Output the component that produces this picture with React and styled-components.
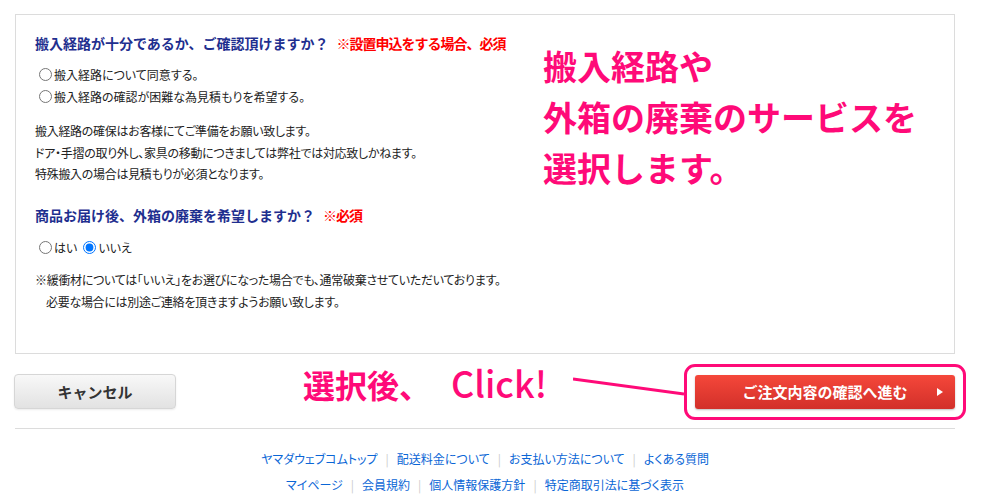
import React from 'react';
import styled, { createGlobalStyle } from 'styled-components';

const GlobalStyle = createGlobalStyle`
  html, body {
    margin: 0;
    padding: 0;
    background: #ffffff;
  }
  body {
    font-family: "Noto Sans CJK JP", "Noto Sans", sans-serif;
    color: #222;
  }
`;

const Page = styled.div`
  width: 993px;
  padding: 14px 0 0 15px;
  box-sizing: border-box;
`;

const Box = styled.div`
  width: 940px;
  box-sizing: border-box;
  border: 1px solid #dcdcdc;
  padding: 18px 20px 40px 19px;
  display: flex;
`;

const Form = styled.div`
  width: 508px;
  flex-shrink: 0;
`;

const Heading = styled.div`
  font-size: 14px;
  font-weight: bold;
  line-height: 20px;
  color: #1f2f8f;
  margin-top: ${p => p.$top || 0}px;
  white-space: nowrap;
`;

const Required = styled.span`
  color: #ff0000;
  margin-left: 8px;
  letter-spacing: -1px;
`;

const Options = styled.div`
  margin-top: ${p => p.$top || 10}px;
  display: flex;
  flex-direction: ${p => (p.$inline ? 'row' : 'column')};
`;

const Option = styled.label`
  display: flex;
  align-items: center;
  height: 22px;
  font-size: 12px;
  font-feature-settings: "palt";
  color: #222;
  white-space: nowrap;
  margin-right: ${p => (p.$inline ? 2 : 0)}px;

  input {
    margin: 0 2px 0 4px;
    width: 13px;
    height: 13px;
  }
`;

const Notes = styled.div`
  margin-top: ${p => p.$top || 13}px;
  font-size: 12px;
  font-feature-settings: "palt";
  letter-spacing: -0.3px;
  line-height: ${p => p.$lh || 21.5}px;
  color: #222;
  white-space: nowrap;
`;

const Indent = styled.div`
  padding-left: 11px;
`;

const Callout = styled.div`
  margin-top: 7px;
  font-size: 34px;
  line-height: 51px;
  font-weight: bold;
  color: #ff0a78;
  white-space: nowrap;
`;

const ActionRow = styled.div`
  margin-top: 10px;
  display: flex;
  align-items: flex-start;
  margin-left: -1px;
`;

const CancelButton = styled.button`
  margin-top: 10px;
  width: 162px;
  height: 35px;
  border: 1px solid #d6d6d6;
  border-radius: 4px;
  background: linear-gradient(#f8f8f8, #e2e2e2);
  box-shadow: 0 1px 2px rgba(0, 0, 0, 0.08);
  font-family: inherit;
  font-size: 15px;
  font-weight: bold;
  color: #333;
  cursor: pointer;
`;

const ClickNote = styled.div`
  margin-left: 127px;
  width: 270px;
  font-size: 32px;
  line-height: 36px;
  font-weight: bold;
  color: #ff0a78;
  white-space: nowrap;
`;

const ClickWord = styled.span`
  margin-left: 20px;
  font-size: 36px;
  font-weight: 500;
`;

const Pointer = styled.svg`
  margin-top: 12px;
  flex-shrink: 0;
`;

const Frame = styled.div`
  border: 3px solid #ff0a78;
  border-radius: 11px;
  padding: 8px;
  width: 260px;
`;

const ConfirmButton = styled.button`
  position: relative;
  width: 260px;
  height: 34px;
  border: none;
  border-radius: 3px;
  background: linear-gradient(#f5473a, #d2302a);
  box-shadow: 0 1px 2px rgba(0, 0, 0, 0.25);
  font-family: inherit;
  font-size: 15px;
  font-weight: bold;
  color: #ffffff;
  cursor: pointer;
`;

const Arrow = styled.span`
  position: absolute;
  right: 12px;
  top: 50%;
  transform: translateY(-50%);
  width: 0;
  height: 0;
  border-left: 6px solid #fff;
  border-top: 4px solid transparent;
  border-bottom: 4px solid transparent;
`;

const Divider = styled.div`
  width: 940px;
  margin-top: 8px;
  border-top: 1px solid #dcdcdc;
`;

const Footer = styled.div`
  width: 940px;
  margin-top: 17px;
  text-align: center;
`;

const LinkLine = styled.div`
  font-size: 12px;
  line-height: 26px;
  font-feature-settings: "palt";
`;

const Link = styled.a`
  color: #0a66d6;
  text-decoration: none;
`;

const Sep = styled.span`
  color: #cccccc;
  margin: 0 8px;
`;

const links1 = ['ヤマダウェブコムトップ', '配送料金について', 'お支払い方法について', 'よくある質問'];
const links2 = ['マイページ', '会員規約', '個人情報保護方針', '特定商取引法に基づく表示'];

const Links = ({ items }) => (
  <LinkLine>
    {items.map((t, i) => (
      <React.Fragment key={t}>
        {i > 0 && <Sep>|</Sep>}
        <Link href="#">{t}</Link>
      </React.Fragment>
    ))}
  </LinkLine>
);

export default function App() {
  return (
    <Page>
      <GlobalStyle />
      <Box>
        <Form>
          <Heading>
            搬入経路が十分であるか、ご確認頂けますか？<Required>※設置申込をする場合、必須</Required>
          </Heading>
          <Options>
            <Option>
              <input type="radio" name="route" />
              搬入経路について同意する。
            </Option>
            <Option>
              <input type="radio" name="route" />
              搬入経路の確認が困難な為見積もりを希望する。
            </Option>
          </Options>
          <Notes>
            <div>搬入経路の確保はお客様にてご準備をお願い致します。</div>
            <div>ドア・手摺の取り外し、家具の移動につきましては弊社では対応致しかねます。</div>
            <div>特殊搬入の場合は見積もりが必須となります。</div>
          </Notes>

          <Heading $top={20}>
            商品お届け後、外箱の廃棄を希望しますか？<Required>※必須</Required>
          </Heading>
          <Options $inline $top={12}>
            <Option $inline>
              <input type="radio" name="box" />
              はい
            </Option>
            <Option $inline>
              <input type="radio" name="box" defaultChecked />
              いいえ
            </Option>
          </Options>
          <Notes $top={10} $lh={22}>
            <div>※緩衝材については「いいえ」をお選びになった場合でも、通常破棄させていただいております。</div>
            <Indent>必要な場合には別途ご連絡を頂きますようお願い致します。</Indent>
          </Notes>
        </Form>
        <Callout>
          搬入経路や
          <br />
          外箱の廃棄のサービスを
          <br />
          選択します。
        </Callout>
      </Box>

      <ActionRow>
        <CancelButton>キャンセル</CancelButton>
        <ClickNote>
          選択後、<ClickWord>Click!</ClickWord>
        </ClickNote>
        <Pointer width="111" height="22" viewBox="0 0 111 22">
          <line x1="0" y1="3" x2="111" y2="18" stroke="#ff0a78" strokeWidth="3" />
        </Pointer>
        <Frame>
          <ConfirmButton>
            ご注文内容の確認へ進む
            <Arrow />
          </ConfirmButton>
        </Frame>
      </ActionRow>

      <Divider />
      <Footer>
        <Links items={links1} />
        <Links items={links2} />
      </Footer>
    </Page>
  );
}
